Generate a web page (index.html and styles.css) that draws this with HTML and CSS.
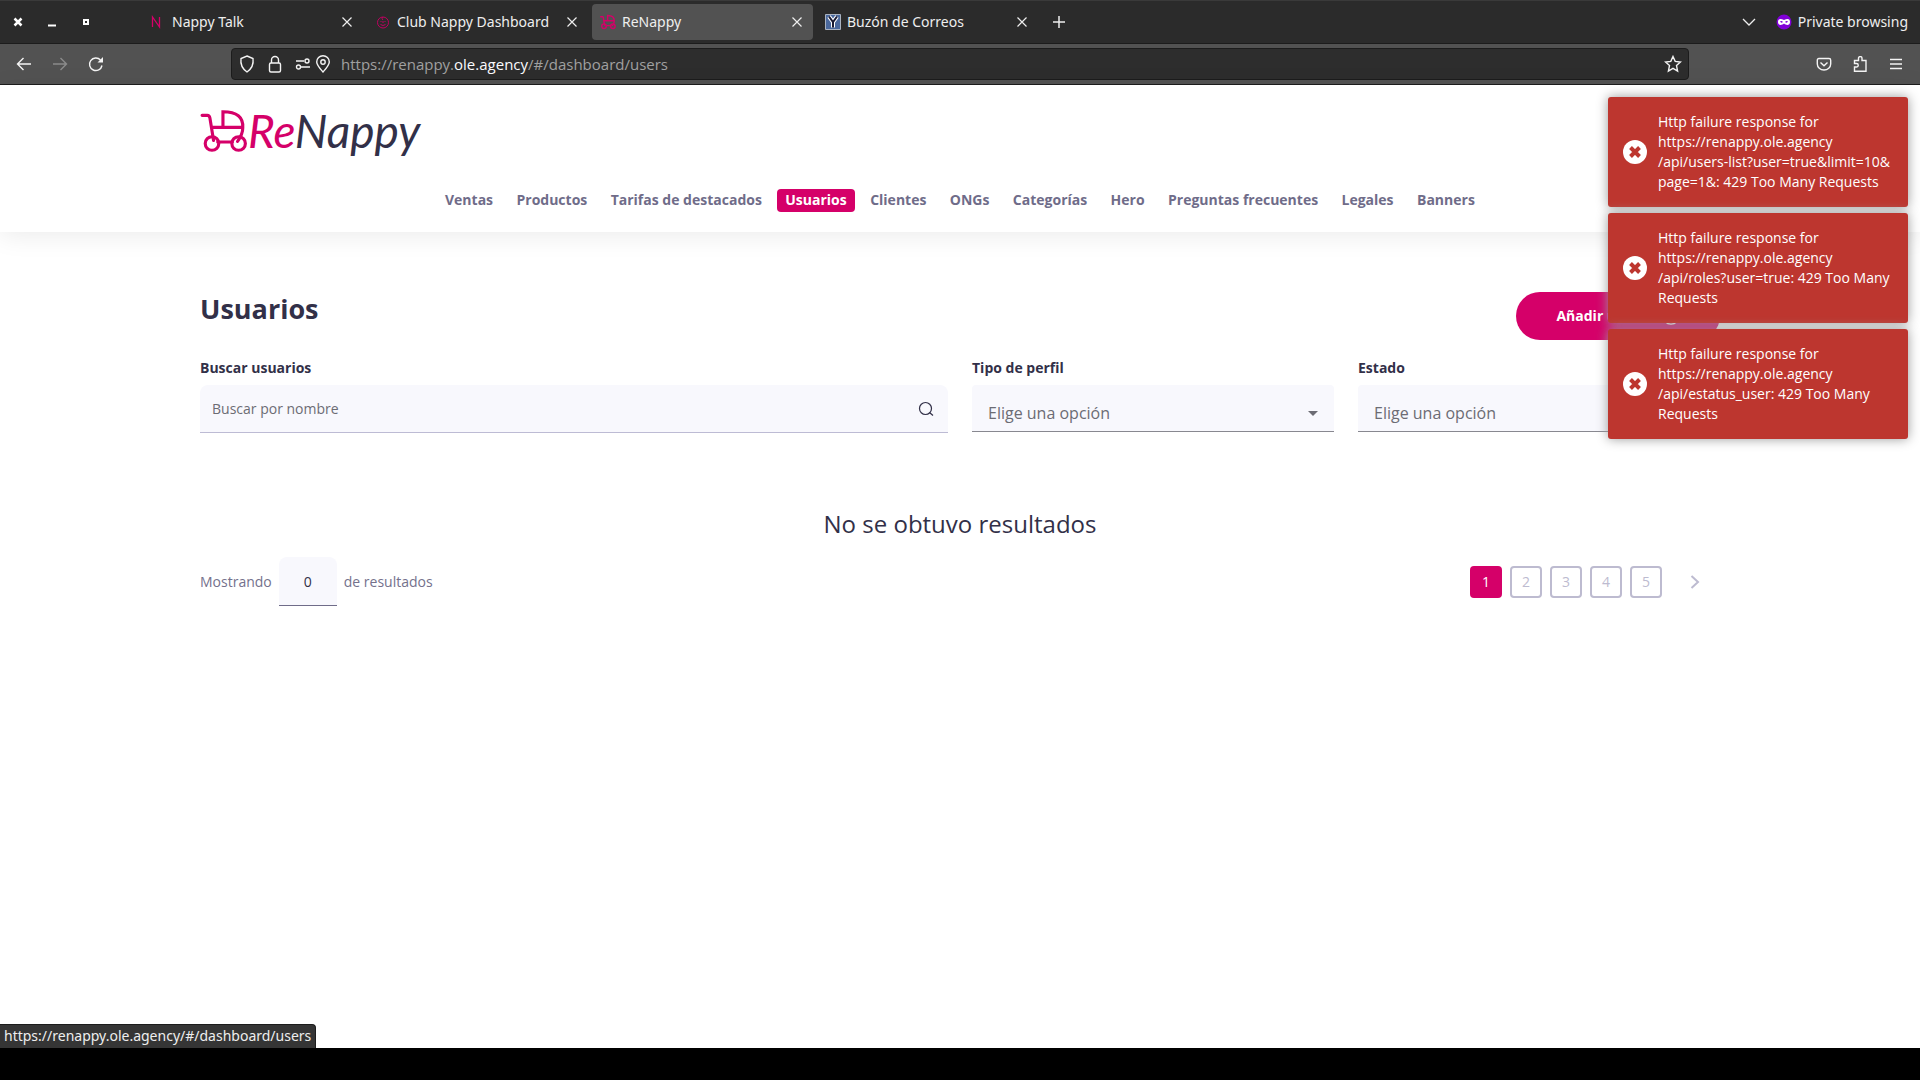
FILE: index.html
```html
<!DOCTYPE html>
<html lang="es">
<head>
<meta charset="utf-8">
<meta name="viewport" content="width=device-width, initial-scale=1">
<title>ReNappy</title>
<link rel="stylesheet" href="styles.css">
</head>
<body>
<svg class="defs" width="0" height="0" aria-hidden="true">
  <symbol id="close" viewBox="0 0 12 12"><path d="M1.500 1.500l9 9M10.500 1.500l-9 9" fill="none" stroke="currentColor" stroke-width="1.200"/></symbol>
  <symbol id="cart" viewBox="0 0 46 42"><path d="M2 6h5q2 0 2.500 2.500L13 30M22 17V2.500q20 0 19 15.500c0 5-2 9-5 13M11 17.500h30M17 31.500h14" /><circle cx="11.500" cy="33" r="6.500"/><circle cx="37" cy="33" r="6.500"/></symbol>
  <symbol id="error" viewBox="0 0 24 24"><circle cx="12" cy="12" r="12" fill="#fff"/><path d="M7.500 7.500l9 9M16.500 7.500l-9 9" stroke="#bd362f" stroke-width="4"/></symbol>
</svg>

<div class="browser">
  <div class="tabbar">
    <div class="window-controls">
      <button type="button" aria-label="Cerrar ventana"><svg width="10" height="10" viewBox="0 0 10 10"><path d="M1.500 1.500l7 7M8.500 1.500l-7 7" stroke="#fff" stroke-width="2.500"/></svg></button>
      <button type="button" aria-label="Minimizar"><svg width="10" height="10" viewBox="0 0 10 10"><path d="M1 8.500h8" stroke="#fff" stroke-width="2"/></svg></button>
      <button type="button" aria-label="Maximizar"><svg width="10" height="10" viewBox="0 0 10 10"><path d="M3 3h4v4H3z" fill="none" stroke="#fff" stroke-width="2"/></svg></button>
    </div>
    <div class="tabs">
      <div class="tab">
        <svg width="16" height="16" viewBox="0 0 16 16"><path d="M2.500 13V3l7 10V3" fill="none" stroke="#d50069" stroke-width="1.300"/></svg>
        <span>Nappy Talk</span>
        <button type="button" aria-label="Cerrar pestaña"><svg width="12" height="12"><use href="#close"/></svg></button>
      </div>
      <div class="tab">
        <svg width="16" height="16" viewBox="0 0 16 16" fill="none" stroke="#c00060"><circle cx="8" cy="8.500" r="5.500"/><path d="M8 3q-2 2 0 3M5.500 7.500h1M9.500 7.500h1M5.500 10.500q2.500 2 5 0M8 7v2"/></svg>
        <span>Club Nappy Dashboard</span>
        <button type="button" aria-label="Cerrar pestaña"><svg width="12" height="12"><use href="#close"/></svg></button>
      </div>
      <div class="tab active">
        <svg class="cart small" width="16" height="16"><use href="#cart"/></svg>
        <span>ReNappy</span>
        <button type="button" aria-label="Cerrar pestaña"><svg width="12" height="12"><use href="#close"/></svg></button>
      </div>
      <div class="tab">
        <svg width="16" height="16" viewBox="0 0 16 16"><path d="M.5.5h15v15H.5z" fill="#4a689c" stroke="#a9b2c0"/><path d="M4 2.500l4 5.500 4-5.500M8 8v5.500" fill="none" stroke="#fff" stroke-width="4"/><path d="M4 2.500l4 5.500 4-5.500M8 8v5.500" fill="none" stroke="#171830" stroke-width="2"/></svg>
        <span>Buzón de Correos</span>
        <button type="button" aria-label="Cerrar pestaña"><svg width="12" height="12"><use href="#close"/></svg></button>
      </div>
    </div>
    <button class="new-tab" type="button" aria-label="Nueva pestaña"><svg width="14" height="14" viewBox="0 0 14 14"><path d="M7 1v12M1 7h12" stroke="currentColor" stroke-width="1.500"/></svg></button>
    <div class="private">
      <button type="button" aria-label="Listar pestañas"><svg width="14" height="14" viewBox="0 0 14 14"><path d="M1 4l6 6 6-6" fill="none" stroke="currentColor" stroke-width="1.300"/></svg></button>
      <svg width="16" height="16" viewBox="0 0 16 16"><circle cx="8" cy="8" r="7.500" fill="#8000d7"/><path d="M2 8c0-3 2-4 6-2 4-2 6-1 6 2s-3 4-6 1.500C5 12 2 11 2 8z" fill="#fff"/><path d="M4 7.500q1.500-1 3 .5-2 1.500-3-.5M12 7.500q-1.500-1-3 .5 2 1.500 3-.5" fill="#8000d7"/></svg>
      <span>Private browsing</span>
    </div>
  </div>

  <div class="toolbar">
    <div class="nav-buttons">
      <button type="button" aria-label="Atrás"><svg width="16" height="16" viewBox="0 0 16 16"><path d="M15 8H1.500M7.500 2l-6 6 6 6"/></svg></button>
      <button type="button" aria-label="Adelante" disabled><svg width="16" height="16" viewBox="0 0 16 16"><path d="M1 8h13.500M8.500 2l6 6-6 6"/></svg></button>
      <button type="button" aria-label="Recargar"><svg width="16" height="16" viewBox="0 0 16 16"><path d="M14 9.500A6.300 6.300 0 1 1 12.500 4"/><path d="M15 1v5.500H9.500z" fill="currentColor" stroke="none"/></svg></button>
    </div>
    <div class="urlbar">
      <svg width="16" height="18" viewBox="0 0 16 18"><path d="M8 1l6 2.500c.8 6-1 10-6 13.500C3 13.500 1.200 9.500 2 3.500z"/></svg>
      <svg class="lock" width="16" height="18" viewBox="0 0 16 18"><rect x="2.500" y="8" width="11" height="9" rx="1.500"/><path d="M4.500 8V5a3.500 3.500 0 0 1 7 0v3"/></svg>
      <svg class="perms" width="16" height="16" viewBox="0 0 16 16"><path d="M1 5h8M6 11h9"/><circle cx="12" cy="5" r="2"/><circle cx="3.500" cy="11" r="2"/></svg>
      <svg width="16" height="18" viewBox="0 0 16 18"><path d="M8 17C4 12.500 1.700 10 1.700 7a6.300 6.300 0 0 1 12.600 0c0 3-2.300 5.500-6.300 10z"/><circle cx="8" cy="7" r="2.200"/></svg>
      <span class="address">https://renappy.<b>ole.agency</b>/#/dashboard/users</span>
      <button type="button" aria-label="Añadir marcador"><svg width="18" height="18" viewBox="0 0 18 18"><path d="M9 1.500l2.200 4.900 5.300.6-4 3.600 1.100 5.400L9 13.300 4.400 16l1.100-5.400-4-3.600 5.300-.6z"/></svg></button>
    </div>
    <div class="tool-buttons">
      <button type="button" aria-label="Pocket"><svg width="16" height="16" viewBox="0 0 16 16"><path d="M3 2.500h10q1.700 0 1.700 1.700V8a6.700 6 0 0 1-13.400 0V4.200Q1.300 2.500 3 2.500zM4.500 6.500L8 9.700l3.500-3.200"/></svg></button>
      <button type="button" aria-label="Extensiones"><svg width="16" height="16" viewBox="0 0 16 16"><path d="M2.500 15.200V11h2a1.700 1.700 0 0 0 0-3.500h-2V4.500h4V2.300a1.700 1.700 0 0 1 3.500 0v2.200h4v10.700z"/></svg></button>
      <button type="button" aria-label="Menú"><svg width="16" height="16" viewBox="0 0 16 16"><path d="M2 3.500h12M2 8h12M2 12.500h12"/></svg></button>
    </div>
  </div>

  <div class="page">
    <header class="site-header">
      <a class="logo" href="#inicio" aria-label="ReNappy">
        <svg class="cart" width="48" height="44"><use href="#cart"/></svg>
        <span class="wordmark"><span>Re</span>Nappy</span>
      </a>
      <nav class="menu">
        <a href="#ventas">Ventas</a>
        <a href="#productos">Productos</a>
        <a href="#tarifas">Tarifas de destacados</a>
        <a class="current" href="#usuarios">Usuarios</a>
        <a href="#clientes">Clientes</a>
        <a href="#ongs">ONGs</a>
        <a href="#categorias">Categorías</a>
        <a href="#hero">Hero</a>
        <a href="#preguntas">Preguntas frecuentes</a>
        <a href="#legales">Legales</a>
        <a href="#banners">Banners</a>
      </nav>
    </header>

    <main class="content">
      <div class="title-row">
        <h1>Usuarios</h1>
        <button class="add" type="button">Añadir usuario
          <svg width="18" height="18" viewBox="0 0 20 20" fill="none" stroke="#fff" stroke-width="1.500"><circle cx="10" cy="10" r="9"/><path d="M10 6v8M6 10h8"/></svg>
        </button>
      </div>
      <form class="filters">
        <div class="field">
          <label for="search">Buscar usuarios</label>
          <div class="search-box">
            <input id="search" type="text" placeholder="Buscar por nombre">
            <svg width="16" height="16" viewBox="0 0 16 16" fill="none" stroke="#323048" stroke-width="1.200"><circle cx="7.500" cy="7.500" r="6"/><path d="M11.500 11.500l3.500 3"/></svg>
          </div>
        </div>
        <div class="field">
          <label for="profile">Tipo de perfil</label>
          <div class="select-box"><select id="profile"><option>Elige una opción</option></select></div>
        </div>
        <div class="field">
          <label for="state">Estado</label>
          <div class="select-box"><select id="state"><option>Elige una opción</option></select></div>
        </div>
      </form>
      <p class="empty">No se obtuvo resultados</p>
      <div class="footer-row">
        <div class="count">
          <label for="count">Mostrando</label>
          <input id="count" type="text" value="0">
          <span>de resultados</span>
        </div>
        <div class="pager">
          <button class="on" type="button">1</button>
          <button type="button">2</button>
          <button type="button">3</button>
          <button type="button">4</button>
          <button type="button">5</button>
          <button class="next" type="button" aria-label="Siguiente"><svg width="10" height="16" viewBox="0 0 10 16"><path d="M1.500 2l6.500 6-6.500 6" fill="none" stroke="currentColor" stroke-width="2"/></svg></button>
        </div>
      </div>
    </main>

    <div class="toasts">
      <div class="toast" role="alert"><svg width="24" height="24"><use href="#error"/></svg><p>Http failure response for<br>https://renappy.ole.agency<br>/api/users-list?user=true&amp;limit=10&amp;<br>page=1&amp;: 429 Too Many Requests</p></div>
      <div class="toast" role="alert"><svg width="24" height="24"><use href="#error"/></svg><p>Http failure response for<br>https://renappy.ole.agency<br>/api/roles?user=true: 429 Too Many<br>Requests</p></div>
      <div class="toast" role="alert"><svg width="24" height="24"><use href="#error"/></svg><p>Http failure response for<br>https://renappy.ole.agency<br>/api/estatus_user: 429 Too Many<br>Requests</p></div>
    </div>
    <div class="status">https://renappy.ole.agency/#/dashboard/users</div>
  </div>
</div>
</body>
</html>
```
FILE: styles.css
```css
* { box-sizing: border-box; }

body {
  margin: 0;
  background: #000;
  color: #323048;
  font: 14px/20px "Open Sans", sans-serif;
}

button, input, select { font: inherit; color: inherit; margin: 0; }
button { padding: 0; border: 0; background: none; display: flex; align-items: center; justify-content: center; }
h1, p { margin: 0; }
a { text-decoration: none; color: inherit; }
svg { flex: none; display: block; }
.defs { position: absolute; }
.cart { fill: none; stroke: #d50069; stroke-width: 3; stroke-linecap: round; }
.cart.small { stroke-width: 4; }

.browser {
  display: flex;
  flex-direction: column;
  min-height: 100vh;
  padding-bottom: 32px;
}

/* Tab strip */
.tabbar {
  display: flex;
  align-items: center;
  height: 44px;
  padding: 0 12px 0 13px;
  background: #2b2b2b;
  border-top: 1px solid #3a3a3a;
  border-bottom: 1px solid #1c1c1c;
  color: #eee;
  font: 14px/20px "Noto Sans", sans-serif;
}
.window-controls { display: flex; gap: 24px; width: 129px; }
.tabs { display: flex; gap: 4px; }
.tab {
  display: flex;
  align-items: center;
  gap: 6px;
  width: 221px;
  height: 36px;
  padding: 0 10px 0 8px;
  border-radius: 4px;
}
.tab span { flex: 1; white-space: nowrap; }
.tab.active { background: #525252; }
.new-tab { margin-left: 14px; }
.private { display: flex; align-items: center; gap: 6px; margin-left: auto; }
.private button { margin-right: 14px; }

/* Address row */
.toolbar {
  display: flex;
  align-items: center;
  height: 41px;
  padding: 0 16px;
  background: #525252;
  border-bottom: 1px solid #1c1c1c;
  color: #f4f4f4;
  font: 15px/20px "Open Sans", sans-serif;
}
.toolbar svg { fill: none; stroke: currentColor; stroke-width: 1.4; }
.nav-buttons { display: flex; gap: 20px; width: 215px; }
.nav-buttons button:disabled { color: #8b8b8b; }
.urlbar {
  flex: 1;
  display: flex;
  align-items: center;
  height: 32px;
  padding: 0 6px 0 7px;
  background: #2d2d2d;
  border: 1px solid #1c1c1c;
  border-radius: 4px;
}
.urlbar .lock { margin-left: 12px; }
.urlbar .perms { margin: 0 4px 0 12px; }
.address { flex: 1; margin-left: 10px; color: #a0a0a0; }
.address b { font-weight: 400; color: #fbfbfe; }
.tool-buttons { display: flex; justify-content: flex-end; gap: 20px; width: 215px; }

/* Web page */
.page { position: relative; flex: 1; background: #fff; }
.site-header {
  padding: 16px 200px 20px;
  box-shadow: 0 4px 24px rgba(0, 0, 0, .08);
}
.logo { display: flex; align-items: center; width: 230px; height: 60px; }
.wordmark { font: italic 46px/60px Lato, sans-serif; color: #323048; }
.wordmark span { color: #d50069; }
.menu {
  display: flex;
  justify-content: space-between;
  max-width: 1046px;
  margin: 28px auto 0;
  color: #6f6c89;
  font-weight: 700;
}
.menu a { padding: 1px 8px 2px; border-radius: 4px; white-space: nowrap; }
.menu .current { background: #d50069; color: #fff; }

.content { padding: 60px 200px 40px; }
.title-row { display: flex; justify-content: space-between; align-items: flex-start; height: 60px; }
h1 { font-size: 27px; line-height: 34px; }
.add {
  gap: 2px;
  height: 48px;
  padding: 0 40px;
  border-radius: 24px;
  background: #d50069;
  color: #fff;
  font-weight: 700;
}
.filters { display: grid; grid-template-columns: 748fr 362fr 362fr; gap: 24px; margin-top: 6px; }
.field label { display: block; margin-bottom: 7px; font-weight: 700; }
.search-box {
  display: flex;
  align-items: center;
  height: 48px;
  padding-right: 14px;
  background: #f8f8fd;
  border-bottom: 1px solid #bdbbd4;
  border-radius: 8px 8px 0 0;
}
.search-box input { flex: 1; height: 46px; padding: 0 12px; border: 0; background: none; }
.search-box input::placeholder { color: #6c6c74; opacity: 1; }
.select-box {
  position: relative;
  background: #f8f8fd;
  border-bottom: 1px solid #888890;
  border-radius: 4px 4px 0 0;
}
.select-box select {
  appearance: none;
  display: block;
  width: 100%;
  height: 46px;
  padding: 10px 16px 0;
  border: 0;
  background: none;
  color: #6c6c74;
  font-size: 16px;
}
.select-box::after {
  content: "";
  position: absolute;
  right: 16px;
  top: 26px;
  border: 5px solid transparent;
  border-top-color: #6c6c74;
  border-bottom: 0;
}
.empty { margin-top: 75px; font-size: 24px; line-height: 32px; text-align: center; }
.footer-row { display: flex; justify-content: space-between; align-items: center; margin-top: 17px; color: #74718c; }
.count { display: flex; align-items: center; gap: 7px; }
.count input {
  width: 58px;
  height: 49px;
  padding: 0;
  border: 0;
  border-bottom: 1px solid #6f6c89;
  border-radius: 8px 8px 0 0;
  background: #f8f8fd;
  color: #323048;
  text-align: center;
}
.pager { display: flex; gap: 8px; padding-right: 20px; }
.pager button {
  width: 32px;
  height: 32px;
  border: 2px solid #bdbbd0;
  border-radius: 4px;
  color: #bdbbd0;
}
.pager .on { background: #d50069; border-color: #d50069; color: #fff; }
.pager .next { width: 10px; margin-left: 20px; border: 0; }

/* Overlays */
.toasts { position: absolute; top: 12px; right: 12px; display: grid; gap: 6px; width: 300px; }
.toast {
  display: flex;
  align-items: center;
  gap: 11px;
  padding: 15px;
  border-radius: 3px;
  background: #bd362f;
  box-shadow: 0 0 12px #999;
  color: #fff;
  white-space: nowrap;
}
.status {
  position: absolute;
  left: 0;
  bottom: 0;
  padding: 1px 4px 2px;
  background: #353535;
  border: 1px solid #1c1c1c;
  border-width: 1px 1px 0 0;
  border-radius: 0 4px 0 0;
  color: #eee;
  font: 14px/20px "Noto Sans", sans-serif;
}
```
